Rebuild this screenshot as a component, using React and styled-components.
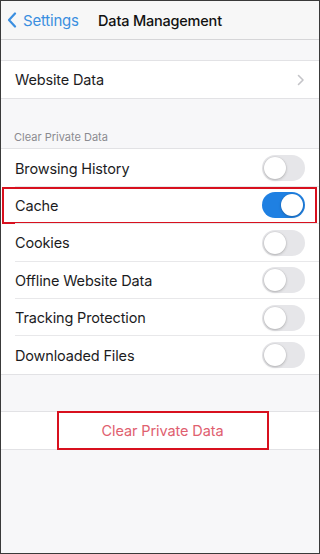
import React from "react";
import styled, { createGlobalStyle } from "styled-components";

const Global = createGlobalStyle`
  html, body { margin: 0; padding: 0; }
  body { font-family: Inter, "Liberation Sans", Roboto, sans-serif; -webkit-font-smoothing: antialiased; }
  * { box-sizing: border-box; }
`;

const Frame = styled.div`
  width: 320px;
  height: 554px;
  border: 1px solid #3a3a3a;
  background: #f7f7f9;
  display: flex;
  flex-direction: column;
  overflow: hidden;
`;

const NavBar = styled.div`
  height: 39px;
  background: #f7f7f7;
  border-bottom: 1px solid #d6d6d8;
  display: grid;
  grid-template-columns: 1fr auto 1fr;
  align-items: center;
  flex-shrink: 0;
`;

const Back = styled.div`
  display: flex;
  align-items: center;
  gap: 6px;
  padding-left: 6px;
  color: #3b8fe0;
  font-size: 15px;
  font-weight: 400;
  letter-spacing: -0.2px;
`;

const Title = styled.div`
  font-size: 14.5px;
  font-weight: 500;
  color: #111;
  letter-spacing: -0.2px;
  justify-self: center;
`;

const Spacer = styled.div`
  height: ${(p) => p.h}px;
  flex-shrink: 0;
`;

const SectionHeader = styled.div`
  height: ${(p) => p.h}px;
  display: flex;
  align-items: flex-end;
  padding: 0 0 4px 13px;
  font-size: 11px;
  color: #8b8b90;
  flex-shrink: 0;
`;

const Group = styled.div`
  background: #fff;
  border-top: 1px solid #e2e2e5;
  border-bottom: 1px solid #e2e2e5;
  flex-shrink: 0;
`;

const RowWrap = styled.div`
  position: relative;
  padding-left: 14px;
  &:not(:last-child)::after {
    content: "";
    position: absolute;
    left: 14px;
    right: 0;
    bottom: 0;
    height: 1px;
    background: #e8e8ea;
  }
`;

const Row = styled.div`
  height: 37.4px;
  display: flex;
  align-items: center;
  justify-content: space-between;
  padding-right: 14px;
  font-size: 14.5px;
  color: #1c1c1e;
  letter-spacing: -0.15px;
`;

const Highlight = styled.div`
  position: absolute;
  left: 1px;
  right: 2px;
  top: 0;
  bottom: 0;
  border: 2px solid #d8101e;
  pointer-events: none;
`;

const Toggle = styled.div`
  width: 43px;
  height: 26px;
  border-radius: 13px;
  background: ${(p) => (p.on ? "#1f80e2" : "#e6e6e9")};
  position: relative;
  flex-shrink: 0;
  &::after {
    content: "";
    position: absolute;
    top: 2px;
    left: ${(p) => (p.on ? "19px" : "2px")};
    width: 22px;
    height: 22px;
    border-radius: 50%;
    background: #fff;
    box-shadow: 0 1px 3px rgba(0, 0, 0, 0.22), 0 0 0 0.5px rgba(0,0,0,0.06);
  }
`;

const ButtonRow = styled.div`
  height: 37px;
  display: flex;
  justify-content: center;
  align-items: center;
`;

const ClearButton = styled.div`
  width: 212px;
  height: 39px;
  margin-left: 5px;
  border: 2px solid #d8101e;
  display: flex;
  align-items: center;
  justify-content: center;
  color: #e0606f;
  font-size: 14.5px;
  letter-spacing: -0.1px;
`;

const Chevron = () => (
  <svg width="8" height="12" viewBox="0 0 8 12" fill="none">
    <path d="M1.5 1.5 L6 6 L1.5 10.5" stroke="#c4c4c8" strokeWidth="1.6" strokeLinecap="round" strokeLinejoin="round" />
  </svg>
);

const BackChevron = () => (
  <svg width="10" height="16" viewBox="0 0 10 16" fill="none">
    <path d="M8 1.5 L2 8 L8 14.5" stroke="#3b8fe0" strokeWidth="2.2" strokeLinecap="round" strokeLinejoin="round" />
  </svg>
);

const items = [
  { label: "Browsing History", on: false },
  { label: "Cache", on: true, mark: true },
  { label: "Cookies", on: false },
  { label: "Offline Website Data", on: false },
  { label: "Tracking Protection", on: false },
  { label: "Downloaded Files", on: false },
];

export default function App() {
  return (
    <>
      <Global />
      <Frame>
        <NavBar>
          <Back>
            <BackChevron />
            <span>Settings</span>
          </Back>
          <Title>Data Management</Title>
          <div />
        </NavBar>
        <Spacer h={20} />
        <Group>
          <RowWrap>
            <Row>
              <span>Website Data</span>
              <Chevron />
            </Row>
          </RowWrap>
        </Group>
        <SectionHeader h={49}>Clear Private Data</SectionHeader>
        <Group>
          {items.map((it) => (
            <RowWrap key={it.label}>
              <Row>
                <span>{it.label}</span>
                <Toggle on={it.on} />
              </Row>
              {it.mark && <Highlight />}
            </RowWrap>
          ))}
        </Group>
        <Spacer h={36} />
        <Group>
          <ButtonRow>
            <ClearButton>Clear Private Data</ClearButton>
          </ButtonRow>
        </Group>
      </Frame>
    </>
  );
}
